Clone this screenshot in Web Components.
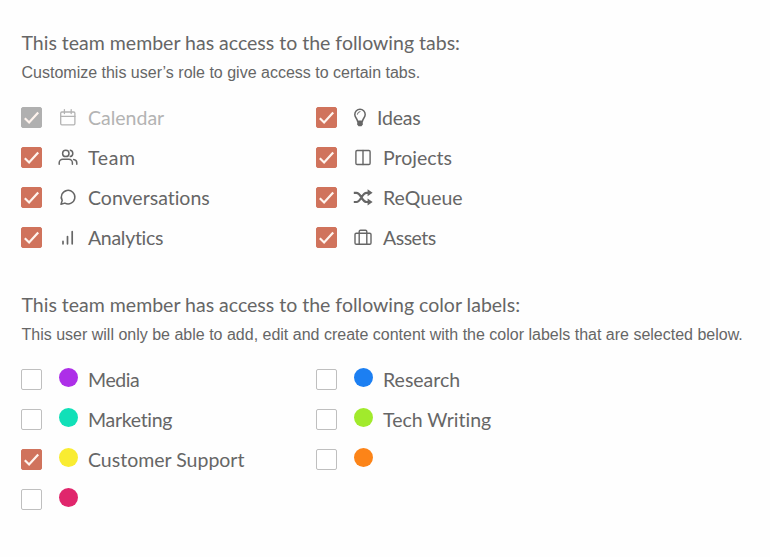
<!DOCTYPE html>
<html lang="en">
<head>
<meta charset="utf-8">
<title>Role access</title>
<style>
	body {
		margin: 0;
		background: #fefefe;
		color: #666;
		font-family: Lato, "Open Sans", sans-serif;
		font-variant-ligatures: none;
	}
</style>
</head>
<body>
<role-access></role-access>

<script>
const stroke = 'fill="none" stroke="currentColor" stroke-linecap="round" stroke-linejoin="round"';

const icons = {
	calendar: `<g ${stroke} stroke-width="1.3"><rect x="2.7" y="4" width="14.2" height="12.8" rx="1.2"/><path d="M2.7 8.4h14.2M6.4 1.6v4M13.2 1.6v4"/></g>`,
	team: `<g ${stroke} stroke-width="1.5"><circle cx="7.8" cy="5.4" r="3.2"/><path d="M1.2 16.2v-1.4a3.6 3.6 0 0 1 3.6-3.6h6a3.6 3.6 0 0 1 3.6 3.6v1.4M12.3 2.2a3.3 3.3 0 0 1 0 6.4M15.6 11.5a3.5 3.5 0 0 1 3.2 3.5v1.2"/></g>`,
	conversations: `<g ${stroke} stroke-width="1.5"><path d="M3 16.2l1.2-3.7a6.8 6.8 0 1 1 2.7 2.6z"/></g>`,
	analytics: `<g ${stroke} stroke-width="1.7"><path d="M5 15.8v-2.4M9.5 15.8V8.5M14.2 15.8V3.7"/></g>`,
	ideas: `<g ${stroke} stroke-width="1.5"><path d="M4.5 13.2C4.3 10.8 1.8 9.3 1.8 6.4a5.2 5.2 0 0 1 10.4 0c0 2.9-2.5 4.4-2.7 6.8z"/><path d="M7 3.6a2.8 2.8 0 0 0-2.6 2.6" stroke-width="1"/></g><path fill="currentColor" d="M4.2 13.2h5.6v3.3L8.5 18.3h-3l-1.3-1.8z"/>`,
	projects: `<g ${stroke} stroke-width="1.4"><rect x="2.9" y="2.5" width="14.2" height="14" rx="1.2"/><path d="M10 2.5v14"/></g>`,
	requeue: `<g fill="none" stroke="currentColor" stroke-width="2.2"><path d="M.8 4.8h2.6c4.8 0 5.2 9.2 10.2 9.2h2.2M.8 14h2.6c4.8 0 5.2-9.2 10.2-9.2h2.2"/></g><path fill="currentColor" d="M14.6 1.3l5 3.5-5 3.5zM14.6 10.5l5 3.5-5 3.5z"/>`,
	assets: `<g ${stroke} stroke-width="1.4"><rect x="2" y="5.2" width="16" height="11" rx="1.3"/><path d="M6.2 16.2V3.6a1.3 1.3 0 0 1 1.3-1.3h5a1.3 1.3 0 0 1 1.3 1.3v12.6"/></g>`
};

class CheckBox extends HTMLElement {

	constructor() {
		super();
		this.shadowDOM = this.attachShadow({mode: 'open'});
	}

	connectedCallback() {
		this.shadowDOM.innerHTML = `
			<style>
				:host {
					display: block;
					flex: none;
					box-sizing: border-box;
					width: 21px;
					height: 21px;
					border: 1px solid #bfbfbf;
					border-radius: 2px;
					background: #fff;
				}

				:host([checked]) {
					background: #d0735c;
					border-color: #d0735c;
				}

				:host([disabled]) {
					background: #b0b0b0;
					border-color: #b0b0b0;
				}

				svg {
					display: none;
					width: 19px;
					height: 19px;
				}

				:host([checked]) svg {
					display: block;
				}
			</style>
			<svg viewBox="0 0 19 19"><path d="M2.8 10.3l4.3 4.2L16.2 4.4" fill="none" stroke="#fff4ee" stroke-width="2.2"/></svg>
		`;
	}
}

class TabIcon extends HTMLElement {

	constructor() {
		super();
		this.shadowDOM = this.attachShadow({mode: 'open'});
	}

	connectedCallback() {
		const width = this.getAttribute('name') === 'ideas' ? 14 : 20;
		this.shadowDOM.innerHTML = `
			<style>
				:host {
					display: block;
					padding-top: 1px;
				}

				svg {
					display: block;
					height: 20px;
				}
			</style>
			<svg width="${width}" viewBox="0 0 ${width} 20">${icons[this.getAttribute('name')]}</svg>
		`;
	}
}

class ColorDot extends HTMLElement {

	constructor() {
		super();
		this.shadowDOM = this.attachShadow({mode: 'open'});
	}

	connectedCallback() {
		this.shadowDOM.innerHTML = `
			<style>
				:host {
					display: block;
					width: 19px;
					height: 19px;
					margin: 0 0 3px 1px;
					border-radius: 50%;
					background: ${this.getAttribute('color')};
				}
			</style>
		`;
	}
}

class AccessOption extends HTMLElement {

	constructor() {
		super();
		this.shadowDOM = this.attachShadow({mode: 'open'});
	}

	connectedCallback() {
		const checked = this.hasAttribute('checked') ? 'checked' : '';
		const disabled = this.hasAttribute('disabled') ? 'disabled' : '';

		this.shadowDOM.innerHTML = `
			<style>
				:host {
					display: flex;
					align-items: center;
					height: 40px;
					font-size: 19.5px;
					line-height: 24px;
					white-space: nowrap;
				}

				:host([disabled]) {
					color: #b3b3b3;
				}

				.mark {
					margin-left: 16px;
				}

				.label {
					margin-left: 10px;
					padding-top: 2px;
				}
			</style>
			<check-box ${checked} ${disabled}></check-box>
			<div class="mark"><slot name="mark"></slot></div>
			<div class="label"><slot></slot></div>
		`;
	}
}

class AccessSection extends HTMLElement {

	constructor() {
		super();
		this.shadowDOM = this.attachShadow({mode: 'open'});
		this.shadowDOM.innerHTML = `
			<style>
				:host {
					display: block;
				}

				h2 {
					margin: 0;
					padding-left: 0.5px;
					font-size: 19.5px;
					font-weight: 400;
					line-height: 26px;
					white-space: nowrap;
				}

				p {
					margin: 7px 0 0;
					padding-left: 0.5px;
					font: 16px/20px "Liberation Sans", Arial, sans-serif;
					white-space: nowrap;
				}

				.options {
					display: grid;
					grid-template-columns: 295px 295px;
					margin-top: 14px;
				}
			</style>
			<h2><slot name="title"></slot></h2>
			<p><slot name="hint"></slot></p>
			<div class="options"><slot></slot></div>
		`;
	}
}

class RoleAccess extends HTMLElement {

	constructor() {
		super();
		this.shadowDOM = this.attachShadow({mode: 'open'});
		this.render();
	}

	style() {
		return `
			:host {
				display: flex;
				flex-direction: column;
				gap: 35px;
				padding: 30px 0 0 21px;
			}
		`;
	}

	option([text, mark, state = '', spacing = 0]) {
		const element = mark.startsWith('#')
			? `<color-dot slot="mark" color="${mark}"></color-dot>`
			: `<tab-icon slot="mark" name="${mark}"></tab-icon>`;
		return `<access-option ${state} style="letter-spacing: ${spacing}px">${element}${text}</access-option>`;
	}

	render() {
		const tabs = [
			['Calendar', 'calendar', 'checked disabled'],
			['Ideas', 'ideas', 'checked', -0.2],
			['Team', 'team', 'checked', 0.6],
			['Projects', 'projects', 'checked'],
			['Conversations', 'conversations', 'checked'],
			['ReQueue', 'requeue', 'checked'],
			['Analytics', 'analytics', 'checked', -0.3],
			['Assets', 'assets', 'checked', -0.5]
		];
		const labels = [
			['Media', '#ad2fe8', '', -0.4],
			['Research', '#1c7ff2'],
			['Marketing', '#11e0b8', '', -0.3],
			['Tech Writing', '#a1ea2c'],
			['Customer Support', '#f9ec31', 'checked'],
			['', '#fc8418'],
			['', '#e0266c']
		];

		this.shadowDOM.innerHTML = `
			<style>${this.style()}</style>

			<access-section>
				<span slot="title">This team member has access to the following tabs:</span>
				<span slot="hint">Customize this user’s role to give access to certain tabs.</span>
				${tabs.map(this.option).join('')}
			</access-section>

			<access-section>
				<span slot="title">This team member has access to the following color labels:</span>
				<span slot="hint">This user will only be able to add, edit and create content with the color labels that are selected below.</span>
				${labels.map(this.option).join('')}
			</access-section>
		`;
	}
}

customElements.define('check-box', CheckBox);
customElements.define('tab-icon', TabIcon);
customElements.define('color-dot', ColorDot);
customElements.define('access-option', AccessOption);
customElements.define('access-section', AccessSection);
customElements.define('role-access', RoleAccess);
</script>
</body>
</html>
